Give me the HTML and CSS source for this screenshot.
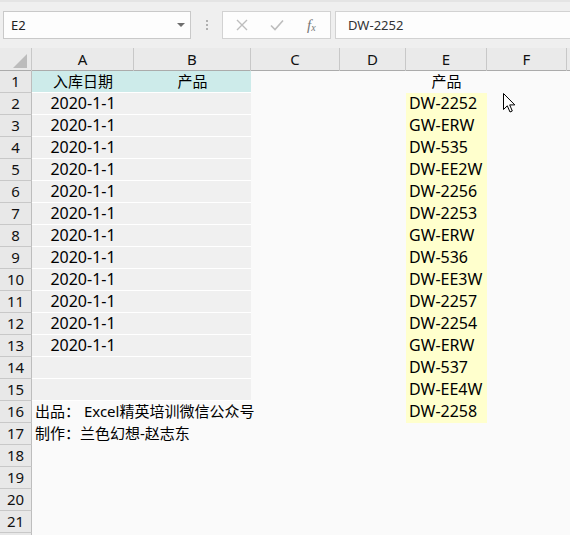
FILE: index.html
```html
<!DOCTYPE html>
<html lang="zh-CN">
<head>
    <meta charset="UTF-8">
    <title>入库产品</title>
    <link rel="stylesheet" href="styles.css">
</head>
<body>
    <!-- Name box and formula bar -->
    <div class="toolbar">
        <div class="namebox">
            <span>E2</span>
            <svg class="drop" width="8" height="4" viewBox="0 0 8 4"><polygon points="0,0 8,0 4,4" fill="#6e6e6e"/></svg>
        </div>
        <div class="sep"><i></i><i></i><i></i></div>
        <div class="fxbox">
            <svg class="btn" width="12" height="12" viewBox="0 0 12 12"><path d="M1 1 L11 11 M11 1 L1 11" stroke="#bdbdbd" stroke-width="1.4" fill="none"/></svg>
            <svg class="btn" width="14" height="12" viewBox="0 0 14 12"><path d="M1 6.5 L5 10.5 L13 1.5" stroke="#bdbdbd" stroke-width="1.6" fill="none"/></svg>
            <span class="fx">f<sub>x</sub></span>
        </div>
        <div class="formula">DW-2252</div>
    </div>

    <div class="sheet">
        <div class="row head">
            <div class="corner"><svg width="14" height="14" viewBox="0 0 14 14"><polygon points="14,0 14,14 0,14" fill="#bcbcbc"/></svg></div>
            <div class="col">A</div>
            <div class="col">B</div>
            <div class="col">C</div>
            <div class="col">D</div>
            <div class="col">E</div>
            <div class="col">F</div>
            <div class="col last"></div>
        </div>

        <div class="row">
            <div class="rh">1</div>
            <div class="cell teal cn center">入库日期</div>
            <div class="cell teal cn center">产品</div>
            <div class="cell"></div>
            <div class="cell"></div>
            <div class="cell cn center">产品</div>
            <div class="cell"></div>
            <div class="cell"></div>
        </div>
        <div class="row">
            <div class="rh">2</div>
            <div class="cell gray center">2020-1-1</div>
            <div class="cell gray"></div>
            <div class="cell"></div>
            <div class="cell"></div>
            <div class="cell yellow">DW-2252</div>
            <div class="cell"></div>
            <div class="cell"></div>
        </div>
        <div class="row">
            <div class="rh">3</div>
            <div class="cell gray center">2020-1-1</div>
            <div class="cell gray"></div>
            <div class="cell"></div>
            <div class="cell"></div>
            <div class="cell yellow">GW-ERW</div>
            <div class="cell"></div>
            <div class="cell"></div>
        </div>
        <div class="row">
            <div class="rh">4</div>
            <div class="cell gray center">2020-1-1</div>
            <div class="cell gray"></div>
            <div class="cell"></div>
            <div class="cell"></div>
            <div class="cell yellow">DW-535</div>
            <div class="cell"></div>
            <div class="cell"></div>
        </div>
        <div class="row">
            <div class="rh">5</div>
            <div class="cell gray center">2020-1-1</div>
            <div class="cell gray"></div>
            <div class="cell"></div>
            <div class="cell"></div>
            <div class="cell yellow">DW-EE2W</div>
            <div class="cell"></div>
            <div class="cell"></div>
        </div>
        <div class="row">
            <div class="rh">6</div>
            <div class="cell gray center">2020-1-1</div>
            <div class="cell gray"></div>
            <div class="cell"></div>
            <div class="cell"></div>
            <div class="cell yellow">DW-2256</div>
            <div class="cell"></div>
            <div class="cell"></div>
        </div>
        <div class="row">
            <div class="rh">7</div>
            <div class="cell gray center">2020-1-1</div>
            <div class="cell gray"></div>
            <div class="cell"></div>
            <div class="cell"></div>
            <div class="cell yellow">DW-2253</div>
            <div class="cell"></div>
            <div class="cell"></div>
        </div>
        <div class="row">
            <div class="rh">8</div>
            <div class="cell gray center">2020-1-1</div>
            <div class="cell gray"></div>
            <div class="cell"></div>
            <div class="cell"></div>
            <div class="cell yellow">GW-ERW</div>
            <div class="cell"></div>
            <div class="cell"></div>
        </div>
        <div class="row">
            <div class="rh">9</div>
            <div class="cell gray center">2020-1-1</div>
            <div class="cell gray"></div>
            <div class="cell"></div>
            <div class="cell"></div>
            <div class="cell yellow">DW-536</div>
            <div class="cell"></div>
            <div class="cell"></div>
        </div>
        <div class="row">
            <div class="rh">10</div>
            <div class="cell gray center">2020-1-1</div>
            <div class="cell gray"></div>
            <div class="cell"></div>
            <div class="cell"></div>
            <div class="cell yellow">DW-EE3W</div>
            <div class="cell"></div>
            <div class="cell"></div>
        </div>
        <div class="row">
            <div class="rh">11</div>
            <div class="cell gray center">2020-1-1</div>
            <div class="cell gray"></div>
            <div class="cell"></div>
            <div class="cell"></div>
            <div class="cell yellow">DW-2257</div>
            <div class="cell"></div>
            <div class="cell"></div>
        </div>
        <div class="row">
            <div class="rh">12</div>
            <div class="cell gray center">2020-1-1</div>
            <div class="cell gray"></div>
            <div class="cell"></div>
            <div class="cell"></div>
            <div class="cell yellow">DW-2254</div>
            <div class="cell"></div>
            <div class="cell"></div>
        </div>
        <div class="row">
            <div class="rh">13</div>
            <div class="cell gray center">2020-1-1</div>
            <div class="cell gray"></div>
            <div class="cell"></div>
            <div class="cell"></div>
            <div class="cell yellow">GW-ERW</div>
            <div class="cell"></div>
            <div class="cell"></div>
        </div>
        <div class="row">
            <div class="rh">14</div>
            <div class="cell gray"></div>
            <div class="cell gray"></div>
            <div class="cell"></div>
            <div class="cell"></div>
            <div class="cell yellow">DW-537</div>
            <div class="cell"></div>
            <div class="cell"></div>
        </div>
        <div class="row">
            <div class="rh">15</div>
            <div class="cell gray"></div>
            <div class="cell gray"></div>
            <div class="cell"></div>
            <div class="cell"></div>
            <div class="cell yellow">DW-EE4W</div>
            <div class="cell"></div>
            <div class="cell"></div>
        </div>
        <div class="row">
            <div class="rh">16</div>
            <div class="cell cn">出品： Excel精英培训微信公众号</div>
            <div class="cell"></div>
            <div class="cell"></div>
            <div class="cell"></div>
            <div class="cell yellow">DW-2258</div>
            <div class="cell"></div>
            <div class="cell"></div>
        </div>
        <div class="row">
            <div class="rh">17</div>
            <div class="cell cn">制作：兰色幻想-赵志东</div>
            <div class="cell"></div>
            <div class="cell"></div>
            <div class="cell"></div>
            <div class="cell"></div>
            <div class="cell"></div>
            <div class="cell"></div>
        </div>
        <div class="row"><div class="rh">18</div></div>
        <div class="row"><div class="rh">19</div></div>
        <div class="row"><div class="rh">20</div></div>
        <div class="row"><div class="rh">21</div></div>
        <div class="row"><div class="rh"></div></div>
    </div>

    <!-- mouse pointer resting beside column E -->
    <svg class="pointer" width="13" height="20" viewBox="0 0 13 20">
        <path d="M0.5 0.5 L0.5 16.5 L4.3 12.8 L7 19 L9.3 18 L6.7 11.9 L11.8 11.9 Z" fill="#fff" stroke="#000" stroke-width="1" stroke-linejoin="round"/>
    </svg>
</body>
</html>
```

FILE: styles.css
```css
* {
    box-sizing: border-box;
}

html, body {
    margin: 0;
    padding: 0;
}

body {
    width: 570px;
    height: 535px;
    overflow: hidden;
    position: relative;
    background: #fafafa;
    font-family: "Noto Sans", "Noto Sans CJK SC", sans-serif;
    color: #000;
}

/* Formula bar */
.toolbar {
    height: 48px;
    display: flex;
    align-items: flex-start;
    padding-top: 9px;
    background: #efefef;
    border-top: 2px solid #e4e4e4;
}

.namebox {
    margin-left: 3px;
    width: 188px;
    height: 28px;
    border: 1px solid #c9c9c9;
    background: #fdfdfd;
    display: flex;
    align-items: center;
    justify-content: space-between;
    padding: 0 5px 0 7px;
    font-size: 13px;
    color: #222;
}

.sep {
    width: 31px;
    height: 28px;
    display: flex;
    flex-direction: column;
    align-items: center;
    justify-content: center;
    gap: 2px;
}

.sep i {
    width: 2px;
    height: 2px;
    background: #b0b0b0;
}

.fxbox {
    width: 109px;
    height: 28px;
    border: 1px solid #d2d2d2;
    background: #fdfdfd;
    display: flex;
    align-items: center;
    padding-left: 13px;
}

.fxbox .btn:first-child {
    margin-right: 22px;
}

.fx {
    margin-left: 23px;
    font-family: "Liberation Serif", serif;
    font-style: italic;
    font-size: 15px;
    color: #777;
    line-height: 1;
}

.fx sub {
    font-size: 10px;
    vertical-align: -1px;
}

.formula {
    margin-left: 4px;
    flex: 1;
    height: 28px;
    border: 1px solid #d2d2d2;
    border-right: none;
    background: #fdfdfd;
    padding-left: 12px;
    font-size: 13px;
    line-height: 26px;
    color: #333;
}

/* Grid */
.row {
    display: grid;
    grid-template-columns: 32px 102px 117px 89px 66px 81px 80px 3px;
    height: 22px;
}

.row.head {
    height: 23px;
    background: #eaeaea;
    border-bottom: 1px solid #ababab;
}

.corner {
    border-right: 1px solid #c8c8c8;
    display: flex;
    align-items: flex-end;
    justify-content: flex-end;
    padding: 0 4px 3px 0;
}

.col {
    border-right: 1px solid #c8c8c8;
    text-align: center;
    font-size: 15px;
    line-height: 23px;
    color: #111;
}

.col.last {
    border-right: none;
}

.rh {
    background: #e8e8e8;
    border-right: 1px solid #bdbdbd;
    border-bottom: 1px solid #c8c8c8;
    text-align: center;
    font-size: 15px;
    line-height: 21px;
    color: #111;
}

.cell {
    font-size: 16px;
    line-height: 21px;
    padding-left: 3px;
    white-space: nowrap;
}

.cell.cn {
    font-size: 15px;
}

.cell.center {
    text-align: center;
    padding-left: 0;
}

.teal {
    background: #cdebea;
    border-bottom: 1px solid #fff;
}

.gray {
    background: #f0f0f0;
    border-bottom: 1px solid #fff;
}

.yellow {
    background: #ffffcd;
}

.pointer {
    position: absolute;
    left: 503px;
    top: 93px;
}
```
